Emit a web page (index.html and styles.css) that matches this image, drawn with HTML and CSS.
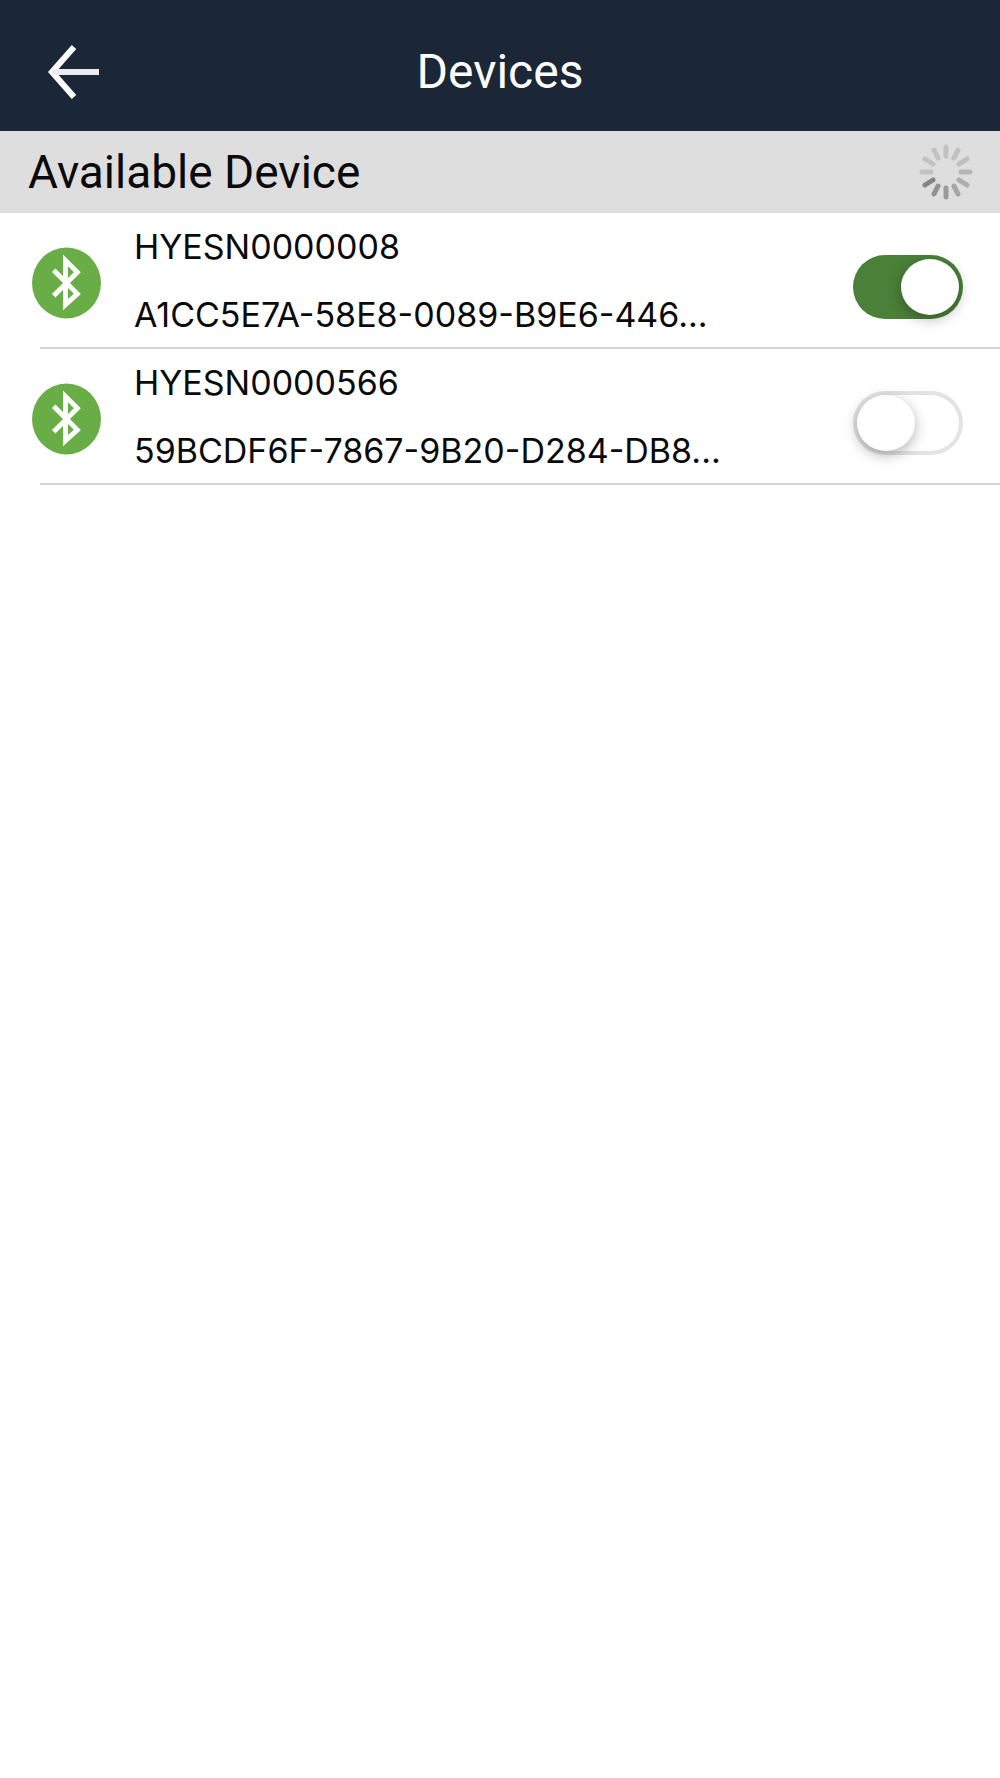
FILE: index.html
```html
<!DOCTYPE html>
<html lang="en">
<head>
<meta charset="utf-8">
<meta name="viewport" content="width=device-width, initial-scale=1">
<title>Devices</title>
<link rel="stylesheet" href="styles.css">
</head>
<body>
<header class="topbar">
  <button class="back" type="button" aria-label="Back">
    <svg class="back-icon" viewBox="0 0 52 54" aria-hidden="true"><path d="M26 2 4 27l22 25" fill="none" stroke="#fff" stroke-width="6"/><path d="M4 27h47" stroke="#eeeaf1" stroke-width="6"/></svg>
  </button>
  <h1 class="title">Devices</h1>
</header>
<main>
  <div class="section">
    <h2 class="section-title">Available Device</h2>
    <svg class="spinner" viewBox="0 0 54 56" role="img" aria-label="Searching">
      <g fill="none" stroke-width="5" stroke-linecap="round">
        <path stroke="#c2c2c2" d="M27 3v9"/>
        <path stroke="#c0c0c0" d="M39 6l-4 8"/>
        <path stroke="#bebebe" d="M48 15l-8 5"/>
        <path stroke="#b5b5b5" d="M51 28h-9"/>
        <path stroke="#adadad" d="M48 41l-8-5"/>
        <path stroke="#a5a5a5" d="M39 50l-4-8"/>
        <path stroke="#9b9b9b" d="M27 53v-9"/>
        <path stroke="#919191" d="M15 50l4-8"/>
        <path stroke="#858585" d="M6 41l8-5"/>
        <path stroke="#c2c2c2" d="M3 28h9"/>
        <path stroke="#c2c2c2" d="M6 15l8 5"/>
        <path stroke="#c2c2c2" d="M15 6l4 8"/>
      </g>
    </svg>
  </div>
  <ul class="devices">
    <li class="device">
      <svg class="bluetooth" viewBox="0 0 70 72" aria-hidden="true"><ellipse cx="35" cy="36" rx="35" ry="36" fill="#68ad45"/><path d="M22 23 46 47 34 58V13L46 25 22 49" fill="none" stroke="#fff" stroke-width="5"/></svg>
      <label class="info" for="device-1">
        <span class="line">HYESN0000008</span>
        <span class="line">A1CC5E7A-58E8-0089-B9E6-446...</span>
      </label>
      <input class="switch" id="device-1" type="checkbox" role="switch" checked>
    </li>
    <li class="device">
      <svg class="bluetooth" viewBox="0 0 70 72" aria-hidden="true"><ellipse cx="35" cy="36" rx="35" ry="36" fill="#68ad45"/><path d="M22 23 46 47 34 58V13L46 25 22 49" fill="none" stroke="#fff" stroke-width="5"/></svg>
      <label class="info" for="device-2">
        <span class="line">HYESN0000566</span>
        <span class="line">59BCDF6F-7867-9B20-D284-DB8...</span>
      </label>
      <input class="switch" id="device-2" type="checkbox" role="switch">
    </li>
  </ul>
</main>
</body>
</html>
```

FILE: styles.css
```css
* {
  box-sizing: border-box;
}

body {
  margin: 0;
  background: #fff;
  color: #0a0a0a;
  font-family: Inter, "Liberation Sans", sans-serif;
}

.topbar {
  display: grid;
  grid-template-columns: 100px 1fr 100px;
  align-items: center;
  padding: 12px 0 0;
  height: 131px;
  background: #1b2636;
  color: #fff;
}

.back {
  display: flex;
  justify-content: flex-end;
  padding: 0;
  border: 0;
  background: none;
  cursor: pointer;
}

.back-icon {
  width: 52px;
  height: 54px;
}

.title {
  margin: 0;
  font-family: Roboto, "Liberation Sans", sans-serif;
  font-size: 48px;
  font-weight: 400;
  line-height: 60px;
  text-align: center;
}

.section {
  display: flex;
  align-items: center;
  justify-content: space-between;
  height: 82px;
  padding: 0 27px 0 28px;
  background: #dedede;
}

.section-title {
  margin: 0;
  font-family: Roboto, "Liberation Sans", sans-serif;
  font-size: 46px;
  font-weight: 400;
  line-height: 60px;
}

.spinner {
  width: 54px;
  height: 56px;
}

.devices {
  margin: 0;
  padding: 0;
  list-style: none;
}

.device {
  display: flex;
  align-items: center;
  padding: 0 37px 0 32px;
  background: linear-gradient(#d4d4d6, #d4d4d6) 40px 100% / 100% 2px no-repeat;
}

.bluetooth {
  flex: none;
  width: 69px;
  height: 72px;
  margin-top: 4px;
}

.info {
  flex: 1;
  min-width: 0;
  padding-left: 33px;
}

.line {
  display: block;
  overflow: hidden;
  font-size: 34px;
  line-height: 68px;
  white-space: nowrap;
  text-overflow: ellipsis;
}

.switch {
  display: flex;
  flex: none;
  align-items: center;
  appearance: none;
  width: 110px;
  height: 64px;
  margin: 12px 0 0;
  padding: 0 4px;
  border-radius: 32px;
  background: #fff;
  box-shadow: inset 0 0 0 4px #e3e3e3;
  cursor: pointer;
}

.switch::before {
  content: "";
  width: 58px;
  height: 56px;
  border-radius: 50%;
  background: #fff;
  box-shadow: 0 4px 14px rgba(0, 0, 0, 0.3);
}

.switch:checked {
  justify-content: flex-end;
  background: #4b8039;
  box-shadow: none;
}
```
